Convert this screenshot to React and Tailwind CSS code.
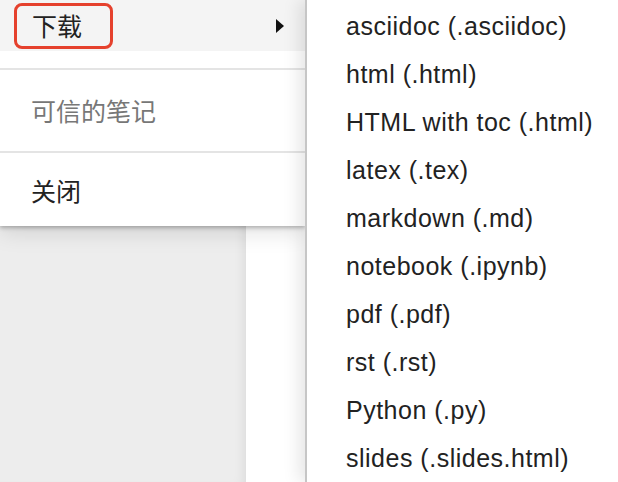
import React from 'react';

const formats = [
  'asciidoc (.asciidoc)',
  'html (.html)',
  'HTML with toc (.html)',
  'latex (.tex)',
  'markdown (.md)',
  'notebook (.ipynb)',
  'pdf (.pdf)',
  'rst (.rst)',
  'Python (.py)',
  'slides (.slides.html)',
];

const cjk = { fontFamily: '"Noto Sans CJK SC", "Noto Sans", sans-serif' };

const App = () => {
  return (
    <div className="relative w-[618px] h-[482px] overflow-hidden bg-white flex">
      {/* left: file menu + page underneath */}
      <div className="w-[305px] flex flex-col shrink-0">
        <div
          className="relative z-10 h-[226px] bg-white flex flex-col shadow-[0_2px_4px_rgba(0,0,0,0.25),0_6px_22px_rgba(0,0,0,0.12)] text-[25px]"
          style={cjk}
        >
          <div className="h-[51px] bg-[#f4f4f4] flex items-center justify-between pr-[21px]">
            <span className="ml-[14px] h-[46px] pl-[15px] pr-[28px] border-[3px] border-[#e5412d] rounded-[8px] flex items-center text-[#222]">
              下载
            </span>
            <svg width="8" height="14" viewBox="0 0 8 14">
              <polygon points="0,0 8,7 0,14" fill="#111" />
            </svg>
          </div>
          <div className="h-[17px]" />
          <div className="h-[2px] bg-[#e4e4e4]" />
          <div className="h-[81px] flex items-center pl-[31px] text-[#777]">可信的笔记</div>
          <div className="h-[2px] bg-[#e4e4e4]" />
          <div className="h-[73px] flex items-center pl-[31px] pt-[2px] text-[#222]">关闭</div>
        </div>
        <div className="flex-1 flex">
          <div className="w-[246px] bg-[#ededed] shadow-[inset_-10px_0_12px_-8px_rgba(0,0,0,0.08)]" />
          <div className="flex-1 bg-white" />
        </div>
      </div>

      {/* submenu */}
      <div
        className="relative z-20 flex-1 bg-white border-l-2 border-[#c6c6c6] shadow-[-6px_0_16px_rgba(0,0,0,0.10)] pt-[3px] pl-[39px] text-[25px] tracking-[0.5px] text-[#222]"
        style={{ fontFamily: '"Liberation Sans", Arial, sans-serif' }}
      >
        {formats.map((f) => (
          <div key={f} className="h-[48px] flex items-center whitespace-nowrap">
            {f}
          </div>
        ))}
      </div>
    </div>
  );
};

export default App;
